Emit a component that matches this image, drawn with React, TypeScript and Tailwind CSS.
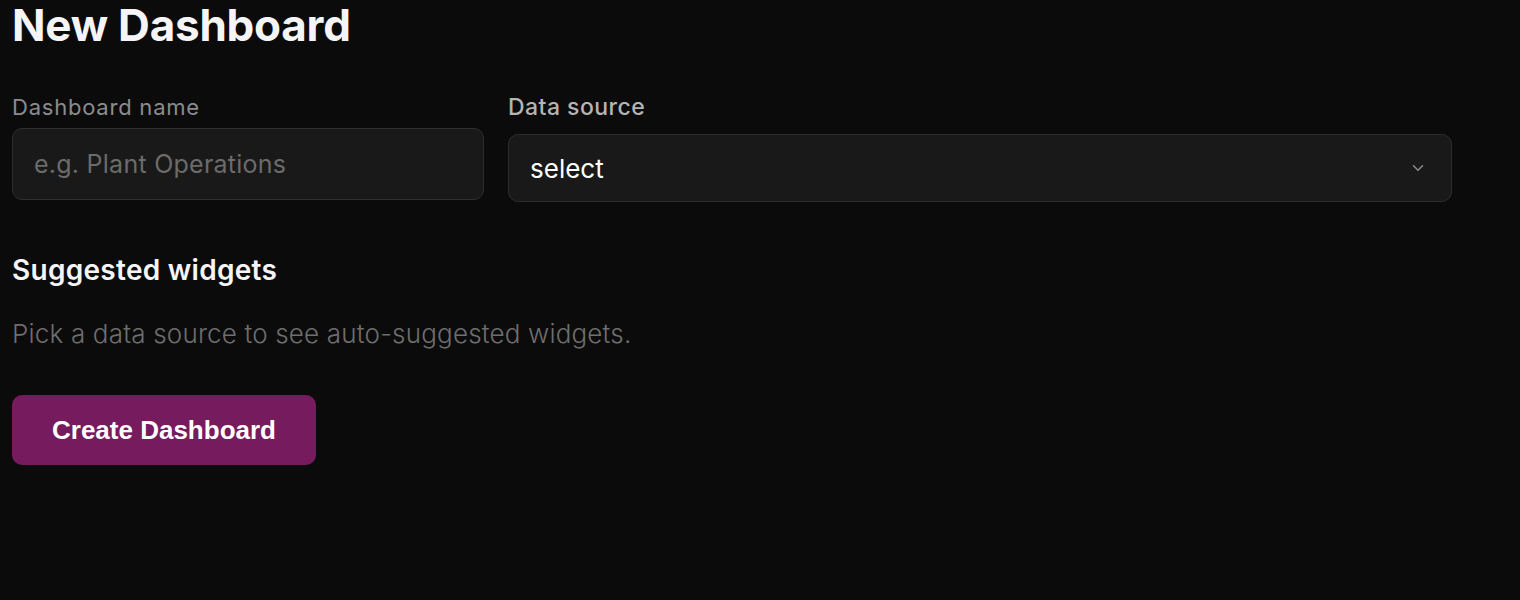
export default function App() {
  return (
    <div className="min-h-[600px] w-full bg-[#0b0b0b] px-3 font-['Inter',sans-serif]">
      <h1 className="pt-[2px] text-[44px] leading-[46px] font-bold tracking-[-0.005em] text-[#f5f5f7]">
        New Dashboard
      </h1>

      <div className="mt-[46px] flex w-[1440px] gap-6">
        <div className="flex flex-1 flex-col">
          <label className="text-[22px] leading-[26px] tracking-[0.035em] text-[#8c8c8c]">
            Dashboard name
          </label>
          <input
            placeholder="e.g. Plant Operations"
            className="mt-[8px] h-[72px] w-full rounded-[10px] border border-[#2e2e2e] bg-[#191919] px-[21px] text-[25px] tracking-[0.01em] text-white outline-none placeholder:text-[#6b6b6b]"
          />
        </div>
        <div className="flex flex-[2] flex-col">
          <label className="text-[23px] leading-[26px] font-medium tracking-[0.02em] text-[#b4b4b4]">
            Data source
          </label>
          <div className="mt-[14px] flex h-[68px] w-full items-center justify-between rounded-[10px] border border-[#2e2e2e] bg-[#191919] pl-[21px] pr-[24px]">
            <span className="text-[26px] text-white">select</span>
            <svg
              width="18"
              height="18"
              viewBox="0 0 24 24"
              fill="none"
              stroke="#8a8a8a"
              strokeWidth="2"
              strokeLinecap="round"
              strokeLinejoin="round"
            >
              <path d="m6 9 6 6 6-6" />
            </svg>
          </div>
        </div>
      </div>

      <h2 className="mt-[51px] text-[28px] leading-[34px] font-semibold tracking-[0.01em] text-[#f5f5f7]">
        Suggested widgets
      </h2>
      <p className="mt-[30px] text-[26px] leading-[34px] font-light tracking-[0.007em] text-[#6e6e6e]">
        Pick a data source to see auto-suggested widgets.
      </p>

      <button className="mt-[44px] h-[70px] w-[304px] rounded-[10px] bg-[#751b5e] text-white">
        <span className="[font-family:'Liberation_Sans',Arial,sans-serif] text-[26px] font-bold">
          Create Dashboard
        </span>
      </button>
    </div>
  )
}
